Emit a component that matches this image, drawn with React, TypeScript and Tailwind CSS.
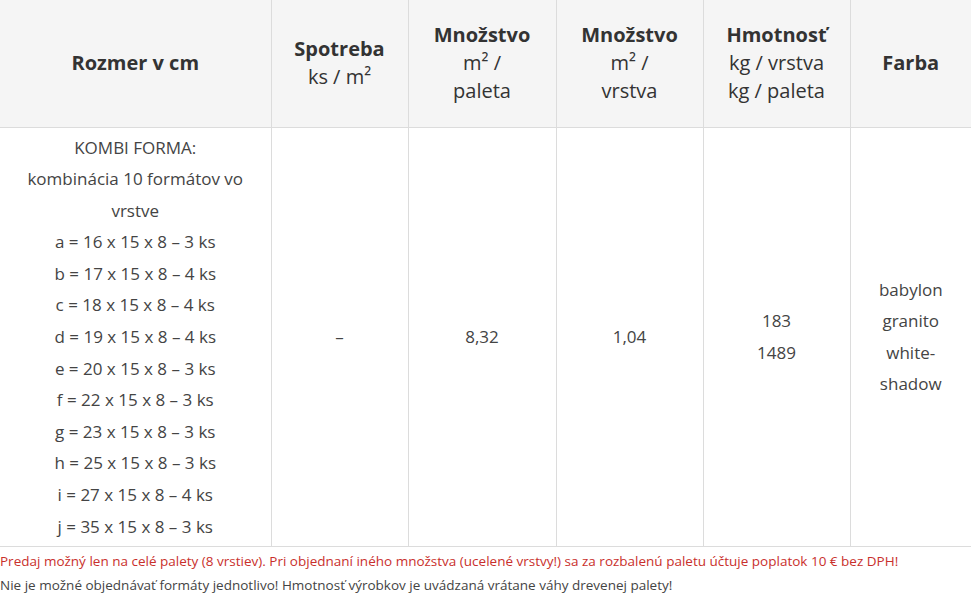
const rows = [
  "a = 16 x 15 x 8 – 3 ks",
  "b = 17 x 15 x 8 – 4 ks",
  "c = 18 x 15 x 8 – 4 ks",
  "d = 19 x 15 x 8 – 4 ks",
  "e = 20 x 15 x 8 – 3 ks",
  "f = 22 x 15 x 8 – 3 ks",
  "g = 23 x 15 x 8 – 3 ks",
  "h = 25 x 15 x 8 – 3 ks",
  "i = 27 x 15 x 8 – 4 ks",
  "j = 35 x 15 x 8 – 3 ks",
]

function Head({ title, sub }: { title: string; sub?: string[] }) {
  return (
    <div>
      <div className="font-bold">{title}</div>
      {sub?.map((s) => (
        <div key={s} className="font-normal">
          {s}
        </div>
      ))}
    </div>
  )
}

export default function App() {
  return (
    <div className="w-[971px] bg-white text-[#444] font-['Open_Sans',sans-serif]">
      <table className="w-[971px] table-fixed border-collapse text-center">
        <colgroup>
          <col className="w-[271px]" />
          <col className="w-[137px]" />
          <col className="w-[148px]" />
          <col className="w-[147px]" />
          <col className="w-[147px]" />
          <col className="w-[121px]" />
        </colgroup>
        <thead>
          <tr className="h-[127px] bg-[#f5f5f5] text-[#333] text-[20px] leading-[28px] border-b border-[#dcdcdc]">
            <th className="px-2 border-r border-[#dcdcdc]">
              <Head title="Rozmer v cm" />
            </th>
            <th className="px-2 border-r border-[#dcdcdc]">
              <Head title="Spotreba" sub={["ks / m²"]} />
            </th>
            <th className="px-2 border-r border-[#dcdcdc]">
              <Head title="Množstvo" sub={["m² /", "paleta"]} />
            </th>
            <th className="px-2 border-r border-[#dcdcdc]">
              <Head title="Množstvo" sub={["m² /", "vrstva"]} />
            </th>
            <th className="px-1 border-r border-[#dcdcdc]">
              <Head title="Hmotnosť" sub={["kg / vrstva", "kg / paleta"]} />
            </th>
            <th className="px-2">
              <Head title="Farba" />
            </th>
          </tr>
        </thead>
        <tbody className="text-[17px] leading-[31.6px]">
          <tr className="border-b border-[#dcdcdc]">
            <td className="px-6 pt-[4px] pb-[4px] border-r border-[#dcdcdc] align-middle">
              <div>KOMBI FORMA:</div>
              <div>kombinácia 10 formátov vo vrstve</div>
              {rows.map((r) => (
                <div key={r}>{r}</div>
              ))}
            </td>
            <td className="px-2 border-r border-[#dcdcdc] align-middle">–</td>
            <td className="px-2 border-r border-[#dcdcdc] align-middle">8,32</td>
            <td className="px-2 border-r border-[#dcdcdc] align-middle">1,04</td>
            <td className="px-2 border-r border-[#dcdcdc] align-middle">
              <div>183</div>
              <div>1489</div>
            </td>
            <td className="px-2 align-middle">babylon granito white-shadow</td>
          </tr>
        </tbody>
      </table>
      <div className="pt-[2px] text-[13.5px] leading-[24px]">
        <p className="text-[#c9302c]">
          Predaj možný len na celé palety (8 vrstiev). Pri objednaní iného množstva (ucelené vrstvy!) sa za rozbalenú
          paletu účtuje poplatok 10 € bez DPH!
        </p>
        <p className="text-[#444]">
          Nie je možné objednávať formáty jednotlivo! Hmotnosť výrobkov je uvádzaná vrátane váhy drevenej palety!
        </p>
      </div>
    </div>
  )
}
